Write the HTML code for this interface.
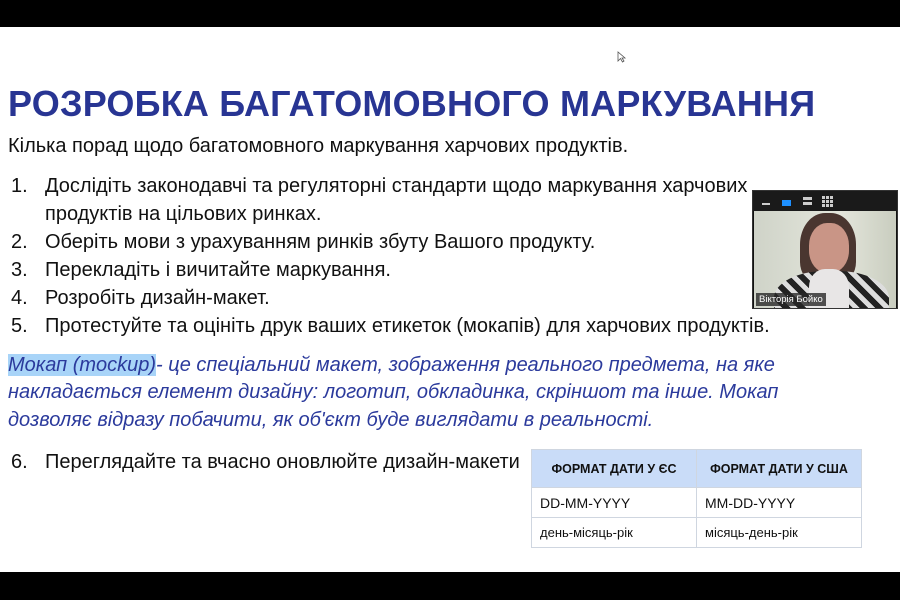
<!DOCTYPE html>
<html><head><meta charset="utf-8"><style>
*{margin:0;padding:0;box-sizing:border-box}
html,body{width:900px;height:600px;overflow:hidden;background:#000;font-family:"Liberation Sans",Arial,sans-serif}
.slide{position:absolute;left:0;top:27px;width:900px;height:545px;background:#fff}
.t{position:absolute;white-space:nowrap}
h1{position:absolute;left:8px;top:56px;font-size:36px;font-weight:bold;color:#283593;white-space:nowrap;letter-spacing:0.2px}
.sub{left:8px;top:108px;font-size:20px;color:#111}
.li{left:11px;font-size:20px;color:#111}
.li span{display:inline-block;width:34px}
.it{left:8px;font-size:20px;font-style:italic;color:#2b3a9c}
.hl{background:#a8d4f8}
table{position:absolute;left:531px;top:422px;border-collapse:collapse;font-size:13px;color:#111}
td,th{border:1px solid #cfd6e0;padding:0 8px;height:30px;text-align:left;font-weight:normal}
th{background:#c9dcf8;font-weight:bold;text-align:center;height:38px;font-size:12.5px}
.vid{position:absolute;left:752px;top:190px;width:146px;height:119px;background:#111;border:1px solid #333}
.bar{height:20px;background:#1a1a1a;position:relative}
.cam{position:absolute;left:1px;top:20px;width:142px;height:97px;background:linear-gradient(90deg,#cfd3c8,#e4e6dc 60%,#c9cdbf);overflow:hidden}
</style></head><body>
<div class="slide">
<svg class="t" style="left:617px;top:24px" width="10" height="12"><path d="M1 1 L1 10 L3.5 7.5 L5.5 11 L7 10 L5 7 L8 7 Z" fill="#fff" stroke="#555" stroke-width="0.8"/></svg>
<h1>РОЗРОБКА БАГАТОМОВНОГО МАРКУВАННЯ</h1>
<div class="t sub">Кілька порад щодо багатомовного маркування харчових продуктів.</div>
<div class="t li" style="top:148px"><span>1.</span>Дослідіть законодавчі та регуляторні стандарти щодо маркування харчових</div>
<div class="t li" style="top:176px"><span></span>продуктів на цільових ринках.</div>
<div class="t li" style="top:204px"><span>2.</span>Оберіть мови з урахуванням ринків збуту Вашого продукту.</div>
<div class="t li" style="top:232px"><span>3.</span>Перекладіть і вичитайте маркування.</div>
<div class="t li" style="top:260px"><span>4.</span>Розробіть дизайн-макет.</div>
<div class="t li" style="top:288px"><span>5.</span>Протестуйте та оцініть друк ваших етикеток (мокапів) для харчових продуктів.</div>
<div class="t it" style="top:327px"><span class="hl">Мокап (mockup)</span>- це спеціальний макет, зображення реального предмета, на яке</div>
<div class="t it" style="top:354px">накладається елемент дизайну: логотип, обкладинка, скріншот та інше. Мокап</div>
<div class="t it" style="top:382px">дозволяє відразу побачити, як об'єкт буде виглядати в реальності.</div>
<div class="t li" style="top:424px"><span>6.</span>Переглядайте та вчасно оновлюйте дизайн-макети</div>
<table>
<tr><th style="width:165px">ФОРМАТ ДАТИ У ЄС</th><th style="width:165px">ФОРМАТ ДАТИ У США</th></tr>
<tr><td style="font-size:14px">DD-MM-YYYY</td><td style="font-size:14px">MM-DD-YYYY</td></tr>
<tr><td>день-місяць-рік</td><td>місяць-день-рік</td></tr>
</table>
</div>
<div class="vid">
<div class="bar">
<div style="position:absolute;left:9px;top:12px;width:8px;height:2px;background:#ccc"></div>
<div style="position:absolute;left:29px;top:9px;width:9px;height:6px;background:#1e90ff"></div>
<div style="position:absolute;left:50px;top:6px;width:9px;height:3px;background:#ccc"></div>
<div style="position:absolute;left:50px;top:11px;width:9px;height:3px;background:#ccc"></div>
<svg style="position:absolute;left:69px;top:5px" width="12" height="12"><g fill="#ccc"><rect x="0" y="0" width="3" height="3"/><rect x="4" y="0" width="3" height="3"/><rect x="8" y="0" width="3" height="3"/><rect x="0" y="4" width="3" height="3"/><rect x="4" y="4" width="3" height="3"/><rect x="8" y="4" width="3" height="3"/><rect x="0" y="8" width="3" height="3"/><rect x="4" y="8" width="3" height="3"/><rect x="8" y="8" width="3" height="3"/></g></svg>
</div>
<div class="cam">
<div style="position:absolute;left:46px;top:2px;width:56px;height:70px;border-radius:45% 45% 30% 30%;background:#4a3630"></div>
<div style="position:absolute;left:55px;top:12px;width:40px;height:50px;border-radius:45%;background:#c99586"></div>
<div style="position:absolute;left:20px;top:60px;width:115px;height:60px;border-radius:45% 45% 0 0;background:repeating-linear-gradient(45deg,#222 0 6px,#ddd 6px 11px)"></div>
<div style="position:absolute;left:55px;top:58px;width:40px;height:45px;background:#e8e6e6;border-radius:40% 40% 0 0"></div>
<div style="position:absolute;left:2px;top:82px;background:rgba(40,40,40,.8);color:#fff;font-size:9.5px;padding:1px 3px">Вікторія Бойко</div>
</div>
</div>
</body></html>
